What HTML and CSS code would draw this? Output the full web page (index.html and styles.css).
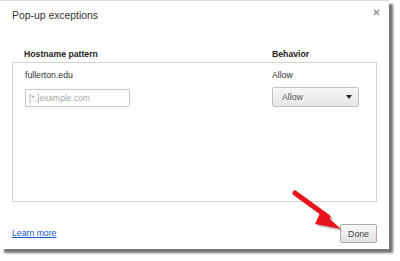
FILE: index.html
```html
<!DOCTYPE html>
<html>
<head>
<meta charset="utf-8">
<link rel="stylesheet" href="styles.css">
</head>
<body>
<div class="dialog">
  <div class="titlebar">
    <span class="title">Pop-up exceptions</span>
    <span class="close">
      <svg width="7" height="7" viewBox="0 0 7 7"><path d="M1 1L6 6M6 1L1 6" stroke="#8a8a8a" stroke-width="1.3"/></svg>
    </span>
  </div>
  <div class="headers">
    <span class="col-host">Hostname pattern</span>
    <span class="col-beh">Behavior</span>
  </div>
  <div class="list">
    <div class="row">
      <span class="col-host">fullerton.edu</span>
      <span class="col-beh">Allow</span>
    </div>
    <div class="row row-edit">
      <span class="col-host"><span class="input">[*.]example.com</span></span>
      <span class="col-beh"><span class="select"><span>Allow</span><span class="caret"></span></span></span>
    </div>
  </div>
  <div class="footer">
    <a class="link" href="#">Learn more</a>
    <span class="button">Done</span>
  </div>
  <svg class="arrow" width="70" height="55" viewBox="0 0 70 55">
    <g transform="translate(2,2)" fill="#9a9a9a" opacity="0.6">
      <path d="M10 12 L43 36" stroke="#9a9a9a" stroke-width="5" stroke-linecap="round"/>
      <path d="M36 30 L56 48 L30 43 Z"/>
    </g>
    <path d="M10 12 L43 36" stroke="#e8131b" stroke-width="5" stroke-linecap="round"/>
    <path d="M36 30 L56 48 L30 43 Z" fill="#e8131b"/>
  </svg>
</div>
</body>
</html>
```
FILE: styles.css
```css
html, body {
  margin: 0;
  padding: 0;
  background: #fff;
}
body {
  width: 400px;
  height: 261px;
  overflow: hidden;
  font-family: "Liberation Sans", Arial, sans-serif;
  color: #333;
}
.dialog {
  position: relative;
  width: 389px;
  height: 249px;
  box-sizing: border-box;
  background: #fff;
  border-top: 1px solid #dcdcdc;
  box-shadow: 4px 4px 2px rgba(60, 60, 60, 0.7);
  padding: 0 12px;
  display: flex;
  flex-direction: column;
}
.titlebar {
  display: flex;
  justify-content: space-between;
  align-items: flex-start;
  height: 31px;
  padding-top: 8px;
  box-sizing: border-box;
}
.title {
  font-size: 10.4px;
  line-height: 14px;
  color: #333;
}
.close {
  display: block;
  margin-top: 0px;
  margin-right: -3px;
  width: 7px;
  height: 7px;
}
.close svg { display: block; }
.headers {
  display: flex;
  height: 30px;
  align-items: flex-end;
  box-sizing: border-box;
  padding-bottom: 3px;
  font-size: 8.7px;
  font-weight: bold;
  color: #222;
}
.col-host {
  width: 248px;
  padding-left: 12px;
  display: flex;
  align-items: center;
}
.col-beh {
  display: flex;
  align-items: center;
}
.list {
  height: 140px;
  box-sizing: border-box;
  border: 1px solid #d4d4d4;
  width: 365px;
  padding-top: 6px;
}
.row {
  display: flex;
  font-size: 8.7px;
  line-height: 12px;
  color: #333;
}
.row .col-host { padding-left: 12px; width: 247px; }
.row-edit {
  margin-top: 7px;
  align-items: center;
}
.input {
  display: flex;
  align-items: center;
  width: 105px;
  height: 18px;
  box-sizing: border-box;
  border: 1px solid #c6c6c6;
  border-radius: 1px;
  padding-left: 3px;
  color: #a8a8a8;
  font-size: 8.5px;
}
.select {
  display: flex;
  align-items: center;
  justify-content: space-between;
  width: 87px;
  height: 20px;
  box-sizing: border-box;
  border: 1px solid #c2c2c2;
  border-radius: 2px;
  background: linear-gradient(#f6f6f6, #e6e6e6);
  padding: 0 6px 0 9px;
  color: #555;
  font-size: 8.7px;
  margin-top: -1px;
}
.caret {
  width: 0;
  height: 0;
  border-left: 3.5px solid transparent;
  border-right: 3.5px solid transparent;
  border-top: 4px solid #222;
}
.footer {
  flex: 1;
  display: flex;
  justify-content: space-between;
  align-items: flex-start;
  padding-top: 22px;
  width: 365px;
}
.link {
  font-size: 8.7px;
  color: #1558d6;
  text-decoration: underline;
  margin-top: 4px;
}
.button {
  display: flex;
  align-items: center;
  justify-content: center;
  width: 37px;
  height: 19px;
  box-sizing: border-box;
  border: 1px solid #aaa;
  border-radius: 2px;
  background: linear-gradient(#f8f8f8, #e2e2e2);
  color: #444;
  font-size: 8.7px;
}
.arrow {
  position: absolute;
  left: 285px;
  top: 180px;
}
```
